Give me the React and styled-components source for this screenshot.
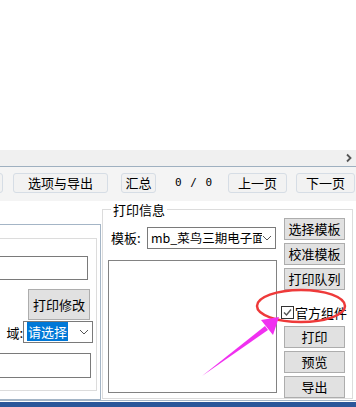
import React from 'react';
import styled, { createGlobalStyle } from 'styled-components';

const GlobalStyle = createGlobalStyle`
  html, body {
    margin: 0;
    padding: 0;
    background: #ffffff;
    overflow: hidden;
  }
  body {
    font-family: "Noto Sans CJK SC", "Liberation Sans", sans-serif;
    font-size: 12px;
    color: #000;
  }
`;

const Page = styled.div`
  width: 356px;
  height: 407px;
  display: flex;
  flex-direction: column;
  position: relative;
  overflow: hidden;
`;

const BlankArea = styled.div`
  height: 150px;
  background: #ffffff;
`;

const ScrollStrip = styled.div`
  height: 16px;
  background: #f0f0f0;
  border-bottom: 1px solid #9fb0c0;
  display: flex;
  justify-content: flex-end;
  align-items: center;
  padding-right: 3px;
`;

const Toolbar = styled.div`
  height: 34px;
  background: #f4f4f4;
  display: flex;
  align-items: flex-start;
  padding-top: 6px;
  box-sizing: border-box;
`;

const ToolButton = styled.div`
  height: 20px;
  box-sizing: border-box;
  width: ${(p) => p.$w}px;
  margin-left: ${(p) => p.$ml}px;
  border: 1px solid #d6dde5;
  border-radius: 3px;
  background: #f2f2f2;
  display: flex;
  align-items: center;
  justify-content: center;
  font-size: 13px;
  line-height: 1;
  flex-shrink: 0;
`;

const Counter = styled.div`
  margin-left: 19px;
  width: 53px;
  height: 20px;
  display: flex;
  align-items: center;
  font-family: "DejaVu Sans Mono", "Liberation Mono", monospace;
  font-size: 11px;
  letter-spacing: 1px;
`;

const Content = styled.div`
  height: 200px;
  display: flex;
  background: #ffffff;
`;

const LeftPanel = styled.div`
  width: 101px;
  margin-top: 23px;
  height: 176px;
  box-sizing: border-box;
  border: 1px solid #a4b5c6;
  border-left: none;
  padding-top: 13px;
  flex-shrink: 0;
`;

const InnerBox = styled.div`
  width: 97px;
  height: 153px;
  box-sizing: border-box;
  border: 1px solid #dcdcdc;
  border-left: none;
  display: flex;
  flex-direction: column;
  padding-top: 17px;
`;

const TextInput = styled.div`
  width: ${(p) => p.$w}px;
  height: ${(p) => p.$h}px;
  box-sizing: border-box;
  border: 1px solid #7a7a7a;
  border-left: none;
  background: #fff;
  margin-top: ${(p) => p.$mt || 0}px;
`;

const ModifyButton = styled.div`
  margin: 9px 0 0 28px;
  width: 62px;
  height: 31px;
  box-sizing: border-box;
  border: 1px solid #adadad;
  background: #e1e1e1;
  display: flex;
  align-items: center;
  justify-content: center;
  font-size: 13px;
`;

const FieldRow = styled.div`
  display: flex;
  align-items: center;
  height: 23px;
  margin-top: 1px;
`;

const FieldLabel = styled.span`
  width: ${(p) => p.$w}px;
  box-sizing: border-box;
  padding-left: ${(p) => p.$pl || 0}px;
  font-size: 13px;
  flex-shrink: 0;
  white-space: nowrap;
  display: flex;
  justify-content: ${(p) => (p.$end ? 'flex-end' : 'flex-start')};
`;

const Select = styled.div`
  width: ${(p) => p.$w}px;
  height: 22px;
  box-sizing: border-box;
  border: 1px solid #7a7a7a;
  background: #fff;
  display: flex;
  align-items: center;
  padding: 0 3px 0 3px;
  flex-shrink: 0;
  overflow: hidden;
`;

const SelectText = styled.span`
  flex: 1;
  min-width: 0;
  overflow: hidden;
  white-space: nowrap;
  font-size: ${(p) => p.$size || 13}px;
  line-height: 20px;
`;

const Highlight = styled.span`
  background: #0078d7;
  color: #fff;
  padding: 0 1px;
`;

const Group = styled.fieldset`
  margin: 0 0 0 1px;
  padding: 0 0 0 5px;
  width: 251px;
  height: 198px;
  box-sizing: border-box;
  border: 1px solid #dcdcdc;
  display: flex;
  gap: 7px;
`;

const Legend = styled.legend`
  margin-left: 3px;
  padding: 0 2px;
  font-size: 13px;
  line-height: 17px;
`;

const MainCol = styled.div`
  width: 169px;
  display: flex;
  flex-direction: column;
  padding-top: 9px;
`;

const TemplateRow = styled.div`
  display: flex;
  align-items: center;
  gap: 2px;
`;

const ListBox = styled.div`
  margin-top: 11px;
  width: 169px;
  height: 133px;
  box-sizing: border-box;
  border: 1px solid #828282;
  background: #fff;
`;

const SideCol = styled.div`
  width: 61px;
  display: flex;
  flex-direction: column;
  gap: 3px;
`;

const SideButton = styled.div`
  height: 22px;
  box-sizing: border-box;
  border: 1px solid #adadad;
  background: #e1e1e1;
  display: flex;
  align-items: center;
  justify-content: center;
  font-size: 13px;
`;

const CheckRow = styled.label`
  display: flex;
  align-items: center;
  height: 16px;
  margin: 12px 0 2px -3px;
  font-size: 13px;
  gap: 1px;
  white-space: nowrap;
`;

const CheckBox = styled.span`
  width: 13px;
  height: 13px;
  box-sizing: border-box;
  border: 1px solid #333;
  background: #fff;
  display: flex;
  align-items: center;
  justify-content: center;
`;

const Footer = styled.div`
  height: 6px;
  border-top: 1px solid #a4b5c6;
  background: linear-gradient(#ffffff 0 1px, #2b579a 1px);
`;

const Overlay = styled.svg`
  position: absolute;
  left: 0;
  top: 0;
  pointer-events: none;
`;

const Chevron = () => (
  <svg width="8" height="10" viewBox="0 0 8 10">
    <path d="M2 1.5 L5.5 5 L2 8.5" fill="none" stroke="#555" strokeWidth="1.8" />
  </svg>
);

const DropArrow = () => (
  <svg width="10" height="6" viewBox="0 0 10 6" style={{ flexShrink: 0 }}>
    <path d="M1 1 L5 5 L9 1" fill="none" stroke="#555" strokeWidth="1" />
  </svg>
);

const Tick = () => (
  <svg width="11" height="11" viewBox="0 0 11 11">
    <path d="M2 5.5 L4.5 8 L9 2.5" fill="none" stroke="#555" strokeWidth="1.4" />
  </svg>
);

export default function App() {
  return (
    <Page>
      <GlobalStyle />
      <BlankArea />
      <ScrollStrip>
        <Chevron />
      </ScrollStrip>
      <Toolbar>
        <ToolButton $w={16} $ml={-13} />
        <ToolButton $w={95} $ml={10}>选项与导出</ToolButton>
        <ToolButton $w={35} $ml={13}>汇总</ToolButton>
        <Counter>0 / 0</Counter>
        <ToolButton $w={59} $ml={0}>上一页</ToolButton>
        <ToolButton $w={59} $ml={9}>下一页</ToolButton>
      </Toolbar>
      <Content>
        <LeftPanel>
          <InnerBox>
            <TextInput $w={88} $h={24} />
            <ModifyButton>打印修改</ModifyButton>
            <FieldRow>
              <FieldLabel $w={23} $end>域:</FieldLabel>
              <Select $w={70}>
                <SelectText>
                  <Highlight>请选择</Highlight>
                </SelectText>
                <DropArrow />
              </Select>
            </FieldRow>
            <TextInput $w={91} $h={25} $mt={9} />
          </InnerBox>
        </LeftPanel>
        <Group>
          <Legend>打印信息</Legend>
          <MainCol>
            <TemplateRow>
              <FieldLabel $w={37} $pl={3}>模板:</FieldLabel>
              <Select $w={129}>
                <SelectText $size={12.5}>mb_菜鸟三期电子面单</SelectText>
                <DropArrow />
              </Select>
            </TemplateRow>
            <ListBox />
          </MainCol>
          <SideCol>
            <SideButton>选择模板</SideButton>
            <SideButton>校准模板</SideButton>
            <SideButton>打印队列</SideButton>
            <CheckRow>
              <CheckBox>
                <Tick />
              </CheckBox>
              官方组件
            </CheckRow>
            <SideButton>打印</SideButton>
            <SideButton>预览</SideButton>
            <SideButton>导出</SideButton>
          </SideCol>
        </Group>
      </Content>
      <Footer />
      <Overlay width="356" height="407" viewBox="0 0 356 407">
        <ellipse cx="301" cy="306" rx="44" ry="16" fill="none" stroke="#ee3a3a" strokeWidth="2.5" />
        <polygon points="202,376 265,326 268,330" fill="#f030f0" />
        <polygon points="279,317 261,320 273,335" fill="#f030f0" />
      </Overlay>
    </Page>
  );
}
